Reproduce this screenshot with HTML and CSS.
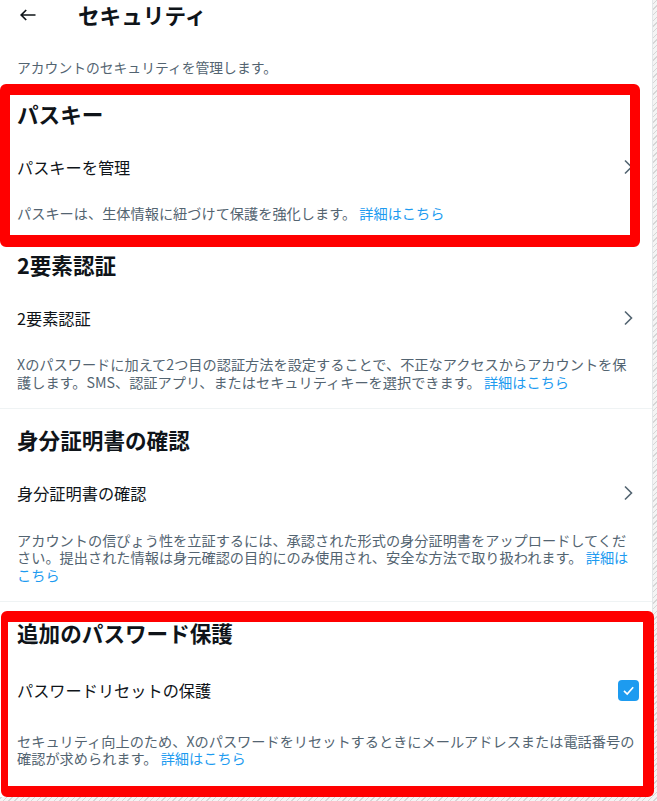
FILE: index.html
```html
<!DOCTYPE html>
<html lang="ja">
<head>
<meta charset="utf-8">
<title>セキュリティ</title>
<link rel="stylesheet" href="styles.css">
</head>
<body>
<div class="page">
  <main class="panel">
    <header class="topbar">
      <button class="back" type="button" aria-label="戻る">
        <svg width="16" height="12" viewBox="0 0 16 12" aria-hidden="true"><path d="M1.2 6H15.5M6.2 1L1.2 6L6.2 11" fill="none" stroke="#0f1419" stroke-width="1.7"/></svg>
      </button>
      <h1 class="topbar-title">セキュリティ</h1>
    </header>
    <p class="lead">アカウントのセキュリティを管理します。</p>

    <section class="group">
      <h2 class="group-title">パスキー</h2>
      <a class="row" href="#"><span>パスキーを管理</span><svg class="chevron" width="20" height="20" viewBox="0 0 20 20" aria-hidden="true"><path d="M10 3.5L16.5 10L10 16.5" fill="none" stroke="#536471" stroke-width="1.6"/></svg></a>
      <p class="desc">パスキーは、生体情報に紐づけて保護を強化します。 <a class="link" href="#">詳細はこちら</a></p>
    </section>

    <section class="group group--divided">
      <h2 class="group-title">2要素認証</h2>
      <a class="row" href="#"><span>2要素認証</span><svg class="chevron" width="20" height="20" viewBox="0 0 20 20" aria-hidden="true"><path d="M10 3.5L16.5 10L10 16.5" fill="none" stroke="#536471" stroke-width="1.6"/></svg></a>
      <p class="desc">Xのパスワードに加えて2つ目の認証方法を設定することで、不正なアクセスからアカウントを保護します。SMS、認証アプリ、またはセキュリティキーを選択できます。 <a class="link" href="#">詳細はこちら</a></p>
    </section>

    <section class="group group--divided group--spaced">
      <h2 class="group-title">身分証明書の確認</h2>
      <a class="row" href="#"><span>身分証明書の確認</span><svg class="chevron" width="20" height="20" viewBox="0 0 20 20" aria-hidden="true"><path d="M10 3.5L16.5 10L10 16.5" fill="none" stroke="#536471" stroke-width="1.6"/></svg></a>
      <p class="desc">アカウントの信ぴょう性を立証するには、承認された形式の身分証明書をアップロードしてください。提出された情報は身元確認の目的にのみ使用され、安全な方法で取り扱われます。 <a class="link" href="#">詳細はこちら</a></p>
    </section>

    <section class="group group--spaced">
      <h2 class="group-title">追加のパスワード保護</h2>
      <label class="row row--check"><span>パスワードリセットの保護</span><span class="checkbox"><svg width="21" height="21" viewBox="0 0 21 21" aria-hidden="true"><path d="M6 10.8L9.2 14L15.2 7.2" fill="none" stroke="#ffffff" stroke-width="1.7"/></svg></span></label>
      <p class="desc">セキュリティ向上のため、Xのパスワードをリセットするときにメールアドレスまたは電話番号の確認が求められます。 <a class="link" href="#">詳細はこちら</a></p>
    </section>
  </main>

  <div class="highlight highlight--passkey"></div>
  <div class="highlight highlight--password"></div>
</div>
</body>
</html>
```

FILE: styles.css
```css
html, body {
  margin: 0;
  padding: 0;
}

body {
  font-family: "Noto Sans CJK JP", "Noto Sans", sans-serif;
  color: #0f1419;
  background: repeating-linear-gradient(135deg, #d6d6d6 0 1px, #f4f4f4 1px 4px);
  min-height: 801px;
}

.page {
  position: relative;
  width: 657px;
}

.panel {
  width: 652px;
  border-right: 1px solid #e3e7e9;
  background: #ffffff;
  padding-bottom: 12px;
}

.topbar {
  display: flex;
  align-items: center;
  height: 30px;
  padding-left: 20px;
  gap: 42px;
}

.back {
  display: flex;
  align-items: center;
  padding: 0;
  margin: 0;
  border: 0;
  background: none;
  width: 16px;
  height: 12px;
}

.topbar-title {
  margin: 0;
  font-size: 21.6px;
  line-height: 26px;
  font-weight: 700;
}

.lead {
  margin: 0;
  padding: 29px 17px 12.7px;
  font-size: 13.8px;
  line-height: 17.3px;
  color: #536471;
}

.group--divided {
  border-bottom: 1px solid #eff3f4;
}

.group-title {
  margin: 0;
  padding: 12px 17px;
  font-size: 21.6px;
  line-height: 26px;
  font-weight: 700;
}

.group--spaced .group-title {
  padding-top: 18px;
}

.row {
  display: flex;
  align-items: center;
  justify-content: space-between;
  height: 56px;
  padding: 0 17px;
  font-size: 16.2px;
  line-height: 20px;
  color: #0f1419;
  text-decoration: none;
}

.row--check {
  height: 64px;
}

.chevron {
  display: block;
  flex: none;
}

.checkbox {
  display: block;
  width: 21px;
  height: 21px;
  border-radius: 4px;
  background: #1d9bf0;
  margin-right: -4px;
}

.checkbox svg {
  display: block;
}

.desc {
  margin: 0;
  padding: 10.5px 15px 17px 17px;
  font-size: 14.2px;
  line-height: 17.5px;
  color: #536471;
}

.link {
  color: #1d9bf0;
  text-decoration: none;
}

.highlight {
  position: absolute;
  box-sizing: border-box;
  border-style: solid;
  border-color: #ff0000;
  border-radius: 6px;
  pointer-events: none;
}

.highlight--passkey {
  left: 0;
  top: 84px;
  width: 640px;
  height: 163px;
  border-width: 11px 10px 12px 10px;
}

.highlight--password {
  left: 1px;
  top: 611px;
  width: 653px;
  height: 186px;
  border-width: 11px 11px 11px 7px;
}
```
